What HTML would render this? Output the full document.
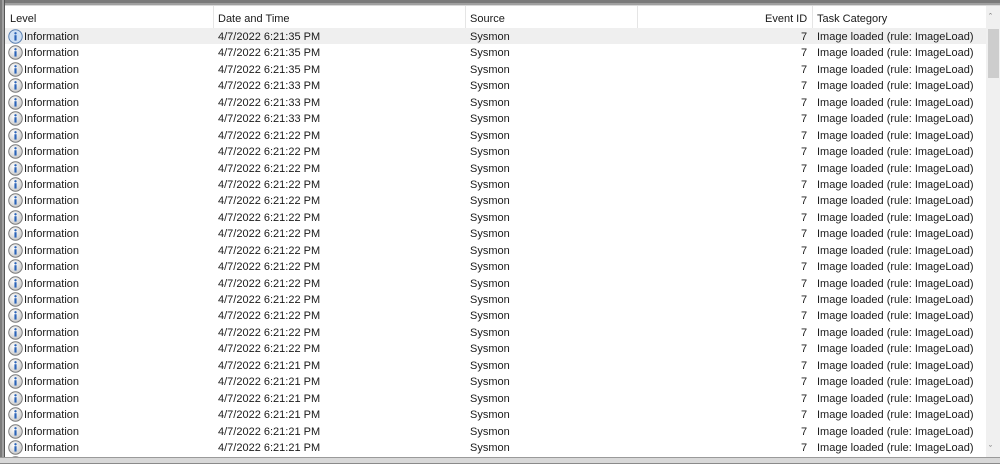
<!DOCTYPE html><html><head><style>
*{margin:0;padding:0;box-sizing:border-box}
body{width:1000px;height:468px;overflow:hidden;background:#fff;font-family:"Liberation Sans",sans-serif;font-size:11px;color:#1a1a1a;position:relative}
.top{position:absolute;left:0;top:0;width:1000px;height:6px;background:#a0a0a0;border-top:3px solid #7a7a7a;border-bottom:1px solid #d8d8d8}
.lft{position:absolute;left:0;top:0;width:5px;height:468px;background:#a0a0a0;border-left:2px solid #7a7a7a;border-right:1px solid #555}
.hdr{position:absolute;left:5px;top:6px;width:981px;height:22px;background:#fff}
.hdr span{position:absolute;top:7px}
.sep{position:absolute;top:6px;width:1px;height:22px;background:#e5e5e5}
.rows{position:absolute;left:5px;top:28px;width:981px;height:430px;overflow:hidden}
.r{position:relative;height:16.44px;line-height:18px}
.r span{position:absolute;top:0}
.r.sel{background:#efefef}
.ic{position:absolute;left:3px;top:1px;width:15px;height:15px}
.sb{position:absolute;left:986px;top:6px;width:14px;height:452px;background:#f0f0f0}
.th{position:absolute;left:988px;top:29px;width:11px;height:49px;background:#cdcdcd}
.bot{position:absolute;left:0;top:457px;width:1000px;height:7px;background:#d8d8d8;border-top:1px solid #9a9a9a;border-bottom:1px solid #8a8a8a}
.bw{position:absolute;left:0;top:464px;width:1000px;height:4px;background:#fff}
</style></head><body>
<div class="hdr">
<span style="left:5px">Level</span><span style="left:213px">Date and Time</span><span style="left:465px">Source</span><span style="left:760px">Event ID</span><span style="left:812px">Task Category</span>
</div>
<div class="sep" style="left:213px"></div><div class="sep" style="left:465px"></div><div class="sep" style="left:637px"></div><div class="sep" style="left:812px"></div>
<div class="rows" id="rows"></div>
<div class="sb"><div style="position:absolute;left:3px;top:6px;font-size:9px;color:#666">&#710;</div><div style="position:absolute;left:3px;top:438px;font-size:9px;color:#666">&#711;</div></div>
<div class="th"></div>
<div class="top"></div>
<div class="lft"></div>
<div class="bot"></div><div class="bw"></div>
<script>
var t=["6:21:35","6:21:35","6:21:35","6:21:33","6:21:33","6:21:33"];for(var i=0;i<14;i++)t.push("6:21:22");for(i=0;i<7;i++)t.push("6:21:21");
var ic='<svg class="ic" viewBox="0 0 14 14"><defs><radialGradient id="g" cx="0.4" cy="0.35" r="0.7"><stop offset="0" stop-color="#fff"/><stop offset="1" stop-color="#c8c8c8"/></radialGradient></defs><circle cx="7" cy="7" r="6.3" fill="url(#g)" stroke="#7a7a7a" stroke-width="0.9"/><circle cx="7" cy="4" r="1.1" fill="#2a63b8"/><rect x="6" y="5.8" width="2" height="5" fill="#2a63b8"/></svg>';
var ic1='<svg class="ic" viewBox="0 0 14 14"><circle cx="7" cy="7" r="6.3" fill="#cfe0f4" stroke="#5a7fb0" stroke-width="0.9"/><circle cx="7" cy="4" r="1.1" fill="#2a63b8"/><rect x="6" y="5.8" width="2" height="5" fill="#2a63b8"/></svg>';
var h='';for(i=0;i<27;i++){h+='<div class="r'+(i==0?' sel':'')+'">'+(i==0?ic1:ic)+'<span style="left:19px">Information</span><span style="left:213px">4/7/2022 '+t[i]+' PM</span><span style="left:465px">Sysmon</span><span style="left:796px">7</span><span style="left:812px">Image loaded (rule: ImageLoad)</span></div>';}
document.getElementById('rows').innerHTML=h;
</script>
</body></html>
